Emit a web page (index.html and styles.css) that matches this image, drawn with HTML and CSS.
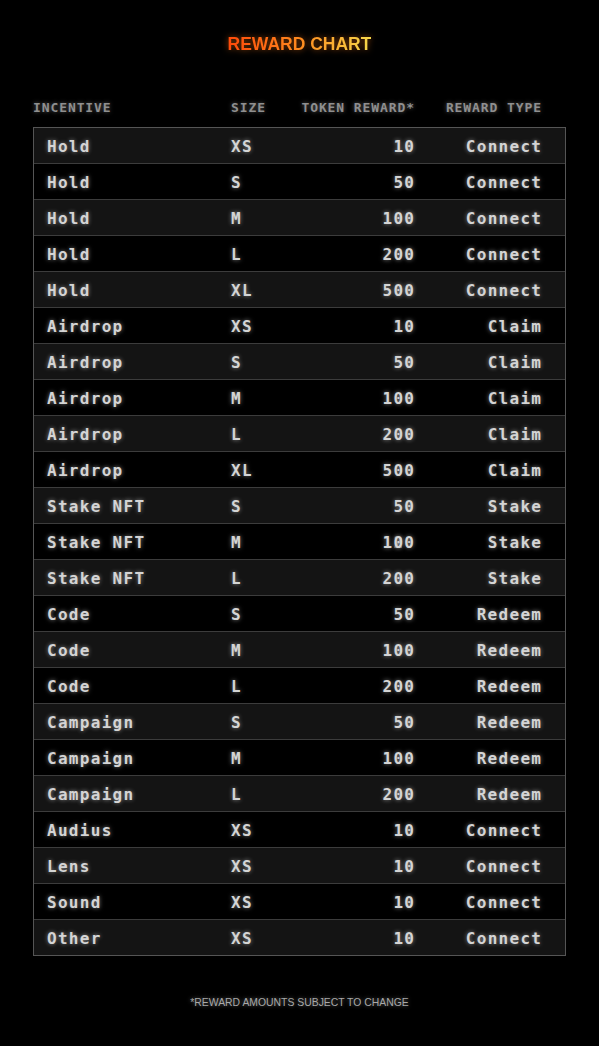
FILE: index.html
```html
<!DOCTYPE html>
<html>
<head>
<meta charset="utf-8">
<link rel="stylesheet" href="styles.css">
</head>
<body>
<main class="page">
  <h1 class="title">REWARD CHART</h1>
  <div class="head">
    <span>INCENTIVE</span>
    <span>SIZE</span>
    <span class="r">TOKEN REWARD*</span>
    <span class="r">REWARD TYPE</span>
  </div>
  <div class="table">
    <div class="row"><span>Hold</span><span>XS</span><span class="r">10</span><span class="r">Connect</span></div>
    <div class="row"><span>Hold</span><span>S</span><span class="r">50</span><span class="r">Connect</span></div>
    <div class="row"><span>Hold</span><span>M</span><span class="r">100</span><span class="r">Connect</span></div>
    <div class="row"><span>Hold</span><span>L</span><span class="r">200</span><span class="r">Connect</span></div>
    <div class="row"><span>Hold</span><span>XL</span><span class="r">500</span><span class="r">Connect</span></div>
    <div class="row"><span>Airdrop</span><span>XS</span><span class="r">10</span><span class="r">Claim</span></div>
    <div class="row"><span>Airdrop</span><span>S</span><span class="r">50</span><span class="r">Claim</span></div>
    <div class="row"><span>Airdrop</span><span>M</span><span class="r">100</span><span class="r">Claim</span></div>
    <div class="row"><span>Airdrop</span><span>L</span><span class="r">200</span><span class="r">Claim</span></div>
    <div class="row"><span>Airdrop</span><span>XL</span><span class="r">500</span><span class="r">Claim</span></div>
    <div class="row"><span>Stake NFT</span><span>S</span><span class="r">50</span><span class="r">Stake</span></div>
    <div class="row"><span>Stake NFT</span><span>M</span><span class="r"><span class="glitch">100<span class="ghost">2</span></span></span><span class="r">Stake</span></div>
    <div class="row"><span>Stake NFT</span><span>L</span><span class="r">200</span><span class="r">Stake</span></div>
    <div class="row"><span>Code</span><span>S</span><span class="r">50</span><span class="r">Redeem</span></div>
    <div class="row"><span>Code</span><span>M</span><span class="r">100</span><span class="r">Redeem</span></div>
    <div class="row"><span>Code</span><span>L</span><span class="r">200</span><span class="r">Redeem</span></div>
    <div class="row"><span>Campaign</span><span>S</span><span class="r">50</span><span class="r">Redeem</span></div>
    <div class="row"><span>Campaign</span><span>M</span><span class="r">100</span><span class="r">Redeem</span></div>
    <div class="row"><span>Campaign</span><span>L</span><span class="r">200</span><span class="r">Redeem</span></div>
    <div class="row"><span>Audius</span><span>XS</span><span class="r">10</span><span class="r">Connect</span></div>
    <div class="row"><span>Lens</span><span>XS</span><span class="r">10</span><span class="r">Connect</span></div>
    <div class="row"><span>Sound</span><span>XS</span><span class="r">10</span><span class="r">Connect</span></div>
    <div class="row"><span>Other</span><span>XS</span><span class="r">10</span><span class="r">Connect</span></div>
  </div>
  <p class="note">*REWARD AMOUNTS SUBJECT TO CHANGE</p>
</main>
</body>
</html>
```
FILE: styles.css
```css
html, body {
  margin: 0;
  padding: 0;
  background: #000;
}
.page {
  width: 533px;
  margin: 0 auto;
  padding-top: 34px;
  display: flex;
  flex-direction: column;
}
.title {
  margin: 0;
  align-self: center;
  font-family: "Liberation Sans", Arial, sans-serif;
  font-weight: bold;
  font-size: 17.5px;
  line-height: 20px;
  background: linear-gradient(90deg, #ff4a0a 0%, #ff8a1e 50%, #f7d84a 100%);
  -webkit-background-clip: text;
  background-clip: text;
  color: transparent;
  filter: drop-shadow(0 0 3px rgba(255, 120, 20, 0.55));
}
.head {
  margin-top: 44px;
  display: grid;
  grid-template-columns: 198px 60px 123px 127px;
  font-family: "DejaVu Sans Mono", monospace;
  font-weight: bold;
  font-size: 13px;
  line-height: 20px;
  letter-spacing: 0.9px;
  white-space: nowrap;
  color: #8f8f8f;
  text-shadow: 0 0 4px rgba(255, 255, 255, 0.35);
}
.r { text-align: right; }
.head .r { margin-right: -0.9px; }
.table {
  margin-top: 9px;
  border: 1px solid #555;
}
.row {
  display: grid;
  grid-template-columns: 184px 90px 93px 127px;
  padding: 2px 24px 0 13px;
  height: 33px;
  align-items: center;
  border-top: 1px solid #3c3c3c;
  font-family: "DejaVu Sans Mono", monospace;
  font-weight: bold;
  font-size: 16px;
  letter-spacing: 1.3px;
  color: #d4d4d4;
  text-shadow: 0 0 4px rgba(255, 255, 255, 0.5);
}
.row:first-child { border-top: 0; }
.row:nth-child(odd) { background: #141414; }
.row .r { margin-right: -1.3px; }
.glitch { position: relative; }
.ghost {
  position: absolute;
  left: 10.9px;
  top: 0;
  opacity: 0.45;
}
.note {
  margin: 40px 0 0;
  align-self: center;
  font-family: "Liberation Sans", Arial, sans-serif;
  font-size: 10.4px;
  line-height: 14px;
  color: #a8a8a8;
  text-shadow: 0 0 4px rgba(255, 255, 255, 0.4);
}
```
